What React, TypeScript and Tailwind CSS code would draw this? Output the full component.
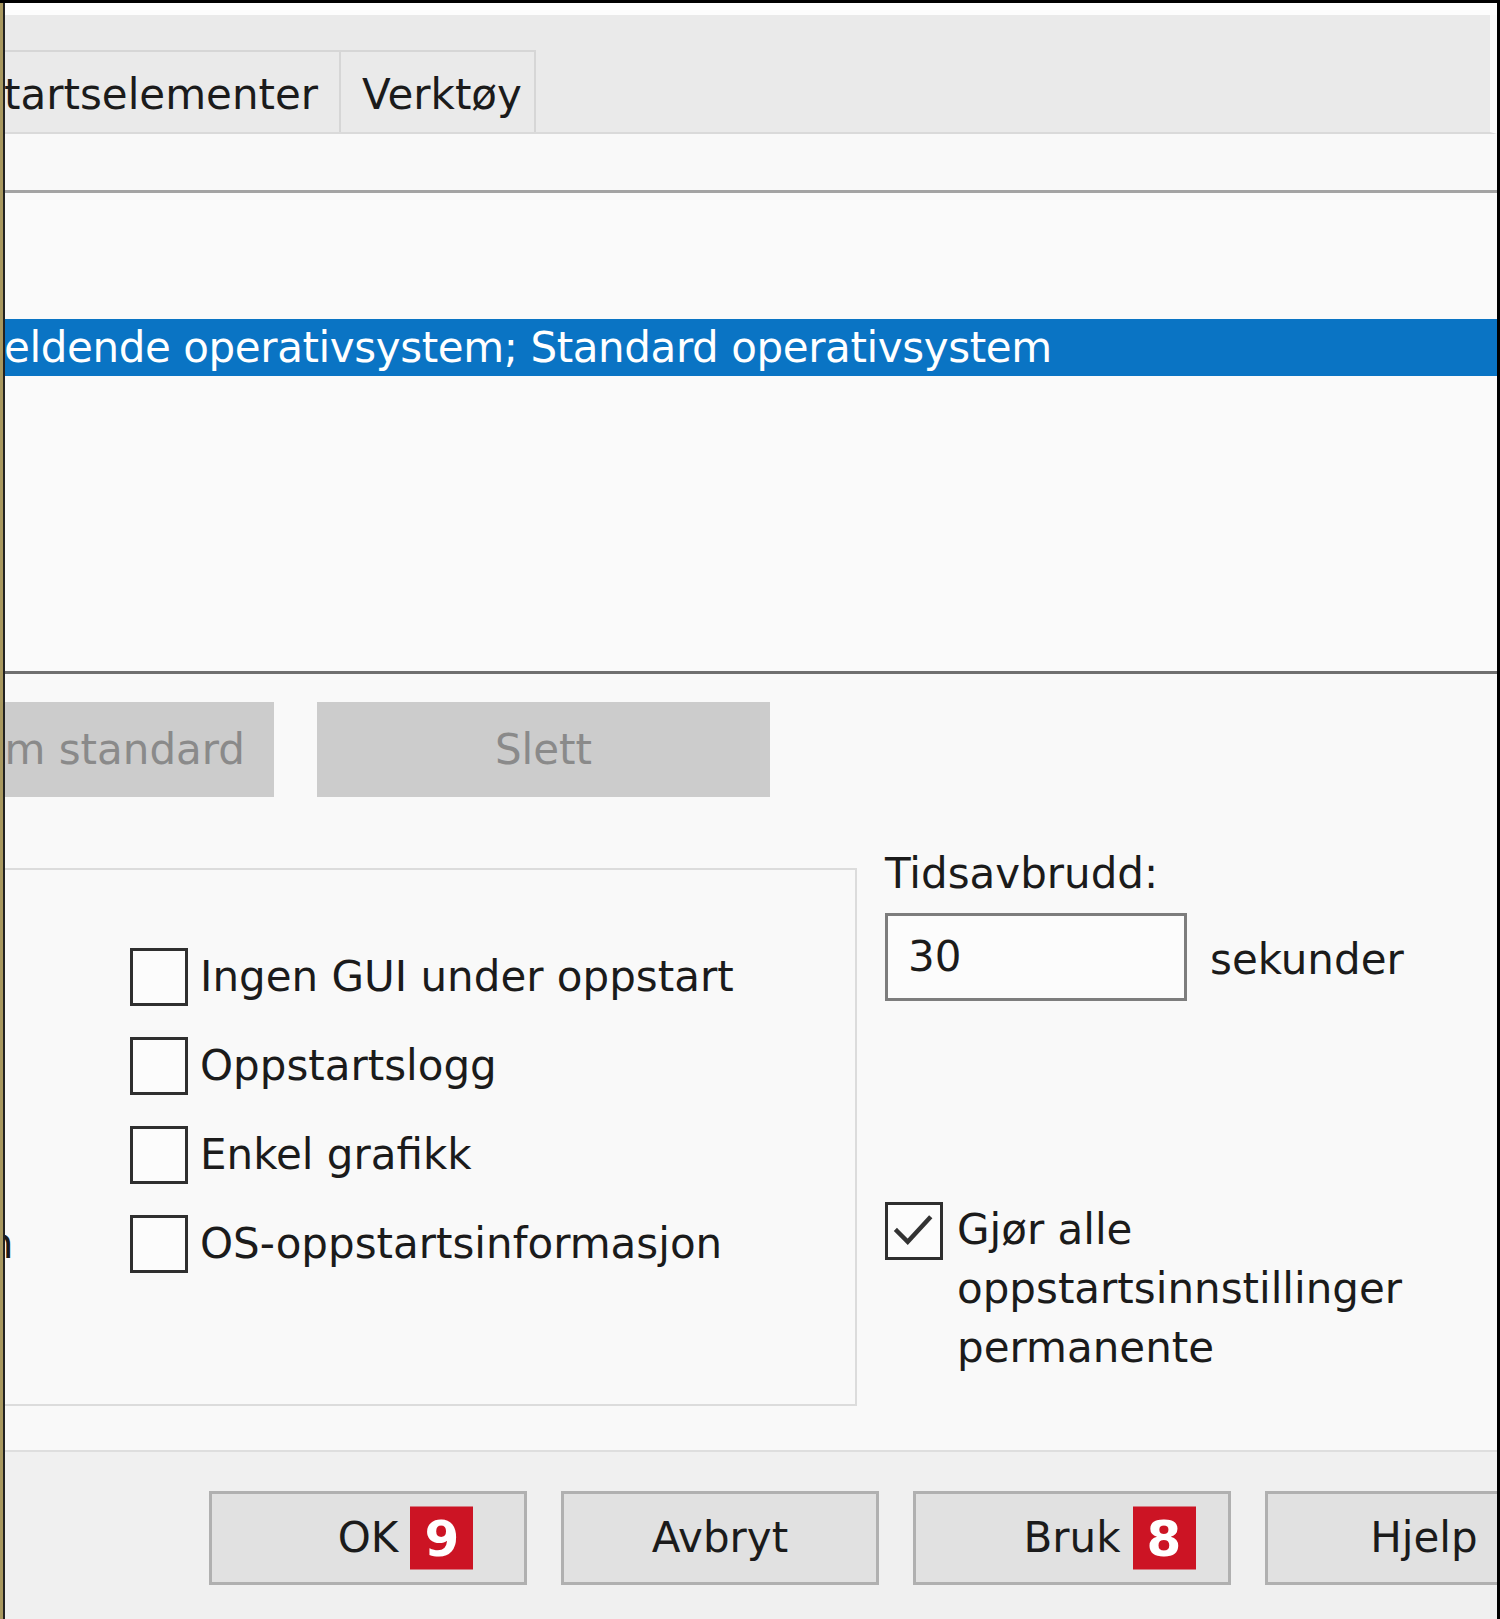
import React from 'react';

const font = "font-['DejaVu_Sans','Liberation_Sans',sans-serif]";

const Checkbox = ({ checked = false }: { checked?: boolean }) => (
  <span className="shrink-0 w-[58px] h-[58px] border-[3px] border-[#2f2f2f] bg-[#fcfcfc] flex items-center justify-center">
    {checked && (
      <svg viewBox="0 0 58 58" className="w-[52px] h-[52px]">
        <path d="M10 29 L22 41 L46 15" fill="none" stroke="#333333" strokeWidth="5" strokeLinecap="square" />
      </svg>
    )}
  </span>
);

const Badge = ({ n }: { n: string }) => (
  <span className="absolute left-full ml-[12px] top-1/2 -translate-y-1/2 w-[63px] h-[63px] bg-[#cc1424] text-white font-bold text-[50px] leading-none flex items-center justify-center">
    {n}
  </span>
);

const DialogButton = ({ label, badge }: { label: string; badge?: string }) => (
  <div className="shrink-0 w-[318px] h-[94px] bg-[#e1e1e1] border-[3px] border-[#b0b0b0] flex items-center justify-center">
    <span className="relative text-[#1b1b1b]">
      {label}
      {badge && <Badge n={badge} />}
    </span>
  </div>
);

export default function App() {
  const bootOptions = ['Ingen GUI under oppstart', 'Oppstartslogg', 'Enkel grafikk', 'OS-oppstartsinformasjon'];

  return (
    <div className={`w-[1500px] h-[1619px] overflow-hidden flex border-t-[3px] border-r-[3px] border-black bg-[#f9f9f9] text-[42px] leading-none text-[#1b1b1b] ${font}`}>
      {/* window frame on the left */}
      <div className="w-[3px] shrink-0 bg-[#a8985f]" />
      <div className="w-[2px] shrink-0 bg-[#222222]" />

      <div className="flex-1 min-w-0 flex flex-col">
        <div className="h-[12px] bg-[#fdfdfd]" />

        {/* Tabs */}
        <div className="h-[119px] bg-[#eaeaea] border-b-[2px] border-[#dadada] border-r-[7px] border-r-[#fbfbfb] flex items-end">
          <div className="w-[336px] h-[82px] border-t-[2px] border-r-[2px] border-[#d6d6d6] flex items-center pt-[6px] overflow-hidden">
            <span className="-ml-[1px] whitespace-nowrap">tartselementer</span>
          </div>
          <div className="w-[195px] h-[82px] border-t-[2px] border-r-[2px] border-[#d6d6d6] flex items-center pt-[6px] pl-[21px]">
            <span>Verktøy</span>
          </div>
        </div>

        <div className="h-[56px]" />

        {/* OS list */}
        <div className="border-t-[3px] border-b-[3px] border-t-[#a3a3a3] border-b-[#707070] bg-[#fafafa] h-[484px]">
          <div className="h-[126px]" />
          <div className="h-[57px] bg-[#0a74c4] text-white flex items-center overflow-hidden whitespace-nowrap">
            <span className="-ml-[1px] tracking-[-0.4px]">eldende operativsystem; Standard operativsystem</span>
          </div>
        </div>

        {/* Disabled buttons */}
        <div className="h-[28px]" />
        <div className="h-[95px] flex gap-[43px]">
          <div className="w-[269px] h-full bg-[#cccccc] text-[#8a8a8a] flex items-center justify-end pr-[29px] overflow-hidden whitespace-nowrap">
            m standard
          </div>
          <div className="w-[453px] h-full bg-[#cccccc] text-[#8a8a8a] flex items-center justify-center">Slett</div>
        </div>

        {/* Boot options */}
        <div className="h-[609px] flex items-start">
          <div className="mt-[71px] w-[852px] h-[538px] border-t-[2px] border-r-[2px] border-b-[2px] border-[#dcdcdc] shrink-0">
            <div className="pt-[78px] flex flex-col gap-[31px]">
              {bootOptions.map((label, i) => (
                <div key={label} className="h-[58px] flex items-center">
                  <div className="w-[125px] h-full flex items-center overflow-hidden">
                    {i === 3 && <span className="-ml-[18px]">n</span>}
                  </div>
                  <Checkbox />
                  <span className="ml-[12px] whitespace-nowrap">{label}</span>
                </div>
              ))}
            </div>
          </div>

          <div className="ml-[28px] pt-[52px] flex flex-col">
            <div className="h-[50px] leading-[50px]">Tidsavbrudd:</div>
            <div className="mt-[14px] flex items-center">
              <div className="w-[302px] h-[88px] border-[3px] border-[#7d7d7d] bg-[#fcfcfc] flex items-center pl-[20px]">30</div>
              <span className="ml-[23px] mt-[6px]">sekunder</span>
            </div>
            <div className="mt-[201px] flex items-start">
              <Checkbox checked />
              <div className="ml-[14px] -mt-[2px] w-[470px] leading-[59px]">
                Gjør alle oppstartsinnstillinger permanente
              </div>
            </div>
          </div>
        </div>

        <div className="h-[44px]" />

        {/* Dialog buttons */}
        <div className="flex-1 border-t-[2px] border-[#dedede] bg-[#f0f0f0] pt-[39px] pl-[204px] flex gap-[34px] overflow-hidden">
          <DialogButton label="OK" badge="9" />
          <DialogButton label="Avbryt" />
          <DialogButton label="Bruk" badge="8" />
          <DialogButton label="Hjelp" />
        </div>
      </div>
    </div>
  );
}
